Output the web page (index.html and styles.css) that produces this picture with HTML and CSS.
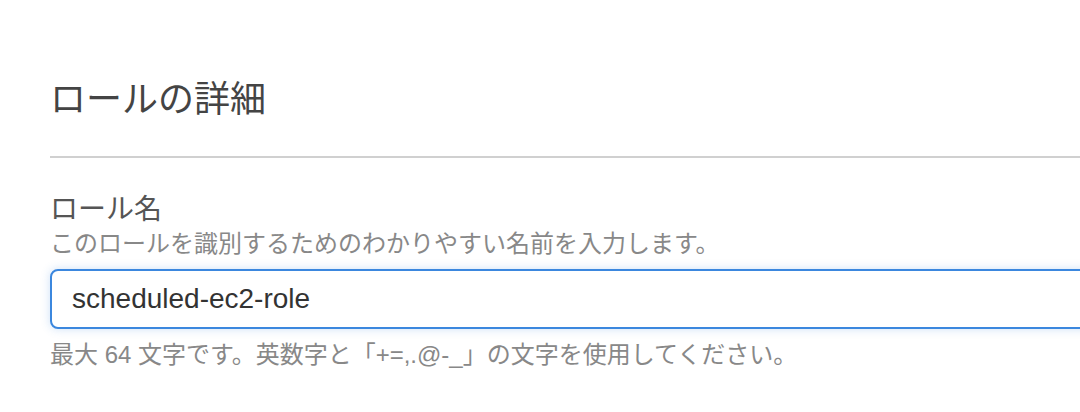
FILE: index.html
```html
<!DOCTYPE html>
<html lang="ja">
<head>
  <meta charset="UTF-8" />
  <meta name="viewport" content="width=device-width, initial-scale=1.0"/>
  <title>ロールの詳細</title>
  <link rel="stylesheet" href="styles.css">
</head>
<body>
  <section class="panel">
    <h2 class="panel-title">ロールの詳細</h2>

    <div class="field">
      <label class="field-label" for="role-name">ロール名</label>
      <p class="field-desc">このロールを識別するためのわかりやすい名前を入力します。</p>
      <input class="field-input" type="text" id="role-name" value="scheduled-ec2-role" />
      <p class="field-hint">最大 64 文字です。英数字と「+=,.@-_」の文字を使用してください。</p>
    </div>
  </section>
</body>
</html>
```

FILE: styles.css
```css
:root {
  --title: #444;
  --label: #555;
  --muted: #888;
  --text: #333;
  --divider: #d0d0d0;
  --focus: #3b87de;
}

* {
  box-sizing: border-box;
}

html, body {
  overflow: hidden;
}

body {
  margin: 0;
  background: #fff;
  font-family: "Liberation Sans", "Noto Sans CJK JP", sans-serif;
}

.panel {
  width: 1200px;
  padding: 76px 0 0 50px;
}

.panel-title {
  margin: 0;
  padding-bottom: 32px;
  border-bottom: 2px solid var(--divider);
  font-size: 36px;
  line-height: 48px;
  font-weight: normal;
  color: var(--title);
}

.field {
  display: flex;
  flex-direction: column;
  padding-top: 34px;
}

.field-label {
  font-size: 28px;
  line-height: 36px;
  color: var(--label);
}

.field-desc {
  margin: 0;
  font-size: 24px;
  line-height: 32px;
  color: var(--muted);
}

.field-input {
  height: 60px;
  margin-top: 9px;
  padding: 0 20px;
  border: 2px solid var(--focus);
  border-radius: 8px;
  background: #fff;
  color: var(--text);
  font-family: "Liberation Sans", sans-serif;
  font-size: 28px;
  outline: none;
  box-shadow: 0 0 10px rgba(59, 135, 222, 0.25);
}

.field-hint {
  margin: 10px 0 0;
  font-size: 24px;
  line-height: 32px;
  color: var(--muted);
}
```
